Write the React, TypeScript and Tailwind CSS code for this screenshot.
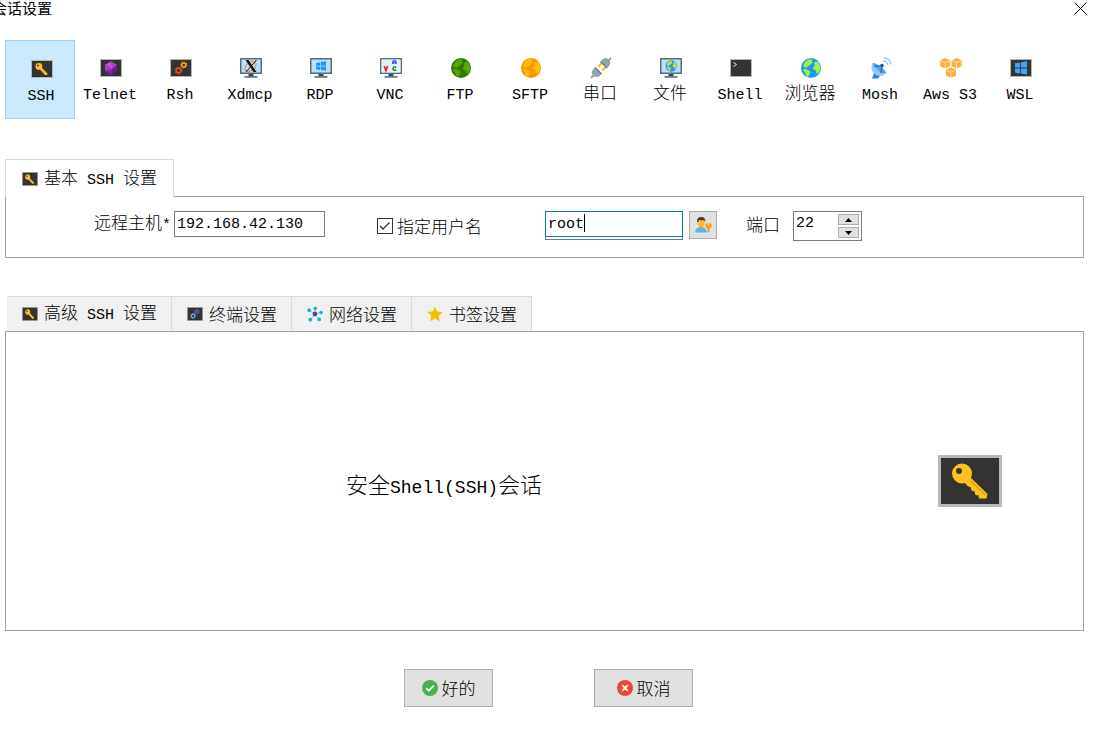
import { useState } from "react";
import type { ReactNode } from "react";

/* Renders mixed text: monospaced Latin runs beside full-width Chinese runs. */
function Mixed({ text, large = false }: { text: string; large?: boolean }) {
  const runs = text.match(/[\x00-\x7f]+|[^\x00-\x7f]+/g) ?? [];
  return (
    <span
      className={
        large
          ? "whitespace-pre font-['Noto_Sans_CJK_SC',sans-serif] text-[22px] leading-7 font-light"
          : "whitespace-pre font-['Noto_Sans_CJK_SC',sans-serif] text-[17px] leading-5 font-light"
      }
    >
      {runs.map((run, i) =>
        run.charCodeAt(0) < 128 ? (
          <span
            key={i}
            className={
              large
                ? "font-['Liberation_Mono',monospace] text-[18px] font-normal"
                : "font-['Liberation_Mono',monospace] text-[15px] font-normal"
            }
          >
            {run}
          </span>
        ) : (
          run
        ),
      )}
    </span>
  );
}

/* ---------- icons ---------- */

function KeyShape() {
  return (
    <>
      <path
        d="M32 22 L49.5 39 L48.5 43.5 H41 L40.5 40.5 L37.5 40 L36.5 36.5 L33.5 35.5 L32.5 32 L30 31.5 L26 27 Z"
        fill="#ffc21c"
      />
      <path d="M33 26 L47.5 40" stroke="#e39a12" strokeWidth="1.3" />
      <path
        fillRule="evenodd"
        d="M24 8.5a10 10 0 1 0 0 20a10 10 0 1 0 0-20zM21 13a3 3 0 1 1 0 6a3 3 0 1 1 0-6z"
        fill="#ffc21c"
      />
    </>
  );
}

function KeyLarge() {
  return (
    <svg width="64" height="52" viewBox="0 0 64 52" aria-hidden="true">
      <rect width="64" height="52" fill="#b8b8b8" />
      <rect x="3" y="3" width="58" height="46" fill="#333" />
      <KeyShape />
    </svg>
  );
}

function Term({ small = false, children }: { small?: boolean; children?: ReactNode }) {
  return (
    <svg
      width={small ? 16 : 22}
      height={small ? 14 : 18}
      viewBox="0 0 22 18"
      preserveAspectRatio="none"
      aria-hidden="true"
    >
      <rect width="22" height="18" fill="#b5b5b5" />
      <rect x="1" y="1" width="20" height="16" fill="#333" />
      {children}
    </svg>
  );
}

function KeyTerm({ small = false }: { small?: boolean }) {
  return (
    <Term small={small}>
      <g transform="translate(-.3 0) scale(.34 .345)">
        <KeyShape />
      </g>
    </Term>
  );
}

function Gears({ small = false, a, b }: { small?: boolean; a: string; b: string }) {
  return (
    <Term small={small}>
      <circle cx="8.5" cy="11.5" r="2.3" fill="none" stroke={a} strokeWidth="1.5" />
      <circle cx="8.5" cy="11.5" r="3.3" fill="none" stroke={a} strokeWidth="1.2" strokeDasharray="1.3 1.3" />
      <circle cx="13.7" cy="6" r="2" fill="none" stroke={b} strokeWidth="1.5" />
      <circle cx="13.7" cy="6" r="3" fill="none" stroke={b} strokeWidth="1.1" strokeDasharray="1.2 1.15" />
    </Term>
  );
}

function Monitor({ children }: { children?: ReactNode }) {
  return (
    <svg width="22" height="20" viewBox="0 0 22 20" aria-hidden="true">
      <rect width="22" height="16" rx=".5" fill="#546e7a" />
      <rect x="1.5" y="1.5" width="19" height="13" fill="#bbdefb" />
      <path d="M8.5 16h5v2h-5z" fill="#37474f" />
      <path d="M4.5 18h13v1.8h-13z" fill="#607d8b" />
      {children}
    </svg>
  );
}

function GlobeShape({ sea, land }: { sea: string; land: string }) {
  return (
    <>
      <circle cx="10" cy="10" r="10" fill={sea} />
      <path d="M3.5 5 L6 2.300 L9.500 1 L11.500 1.500 L10.500 3 L12 4.500 L9.500 6.500 L8 8 L6.500 8.500 L5.500 10 L3 9 L2.200 7z" fill={land} />
      <path d="M2.500 10.500 L6 11.500 L9.500 13.500 L9 16 L7.500 17.500 L7 19 L5 17.800 L4.500 15 L2.500 13z" fill={land} />
      <path d="M14.500 3.500 L17 4 L19 7.500 L19.500 10.500 L18.300 14 L16.500 16 L15.300 14.500 L15 12.500 L12.500 11.500 L12 9.500 L13.800 7.500 L13 5.500z" fill={land} />
    </>
  );
}

function Globe({ sea, land }: { sea: string; land: string }) {
  return (
    <svg width="20" height="20" viewBox="0 0 20 20" aria-hidden="true">
      <GlobeShape sea={sea} land={land} />
    </svg>
  );
}

const gem = (
  <Term>
    <path d="M11 2.5l6 3.5v5.5L11 15.8 5 11.5V6z" fill="#8e24aa" />
    <path d="M11 2.5L17 6l-4.500 4L11 2.500z" fill="#ab47bc" />
    <path d="M11 2.500L5 6l7.500 4z" fill="#ba55d3" />
    <path d="M17 6v5.5L11 15.8l1.5-6z" fill="#6a1b9a" />
    <path d="M5 6l7.5 4L5 11.5z" fill="#a63cc3" />
  </Term>
);

const xdmcp = (
  <Monitor>
    <ellipse cx="10.5" cy="8.5" rx="6" ry="4" transform="rotate(-35 10.5 8.5)" fill="none" stroke="#f08a5c" strokeWidth="1.3" />
    <path d="M5.5 2h3l8 12h-3z" fill="#111" />
    <path d="M16.5 2L6 14" stroke="#111" strokeWidth="1" />
  </Monitor>
);

const rdp = (
  <Monitor>
    <path d="M6 5l4.2-.8v3.5H6zM10.9 4.1l5.1-.9v4.5h-5.1zM6 8.4h4.2v3.5L6 11.2zM10.9 8.4H16v4.4l-5.1-.8z" fill="#2196f3" />
  </Monitor>
);

const vnc = (
  <Monitor>
    <rect x="1.5" y="1.5" width="19" height="13" fill="#e3f2fd" />
    <path d="M4.2 8l1.7 4.7L7.7 8" stroke="#f01818" strokeWidth="1.6" fill="none" />
    <path d="M12.7 6V4.2q0-1.6 1.7-1.6t1.7 1.6V6M12.7 4.9h3.4" stroke="#3030e0" strokeWidth="1.1" fill="none" />
    <path d="M16.3 9.4q-3-1.2-3.2 1.2q.2 2.5 3.2 1.3" stroke="#109820" strokeWidth="1.6" fill="none" />
  </Monitor>
);

const plug = (
  <svg width="22" height="22" viewBox="0 0 22 22" aria-hidden="true">
    <path d="M8.5 9.5L12 6M12 13.5l4-4" stroke="#ffb300" strokeWidth="2" />
    <path d="M21 1L17.500 4.500M1 21L4.500 17.500" stroke="#90a4ae" strokeWidth="1.8" />
    <path d="M10.5 4.5L13 2q2.5-2 5.5.5 3 3 .8 6L17 11z" fill="#90a4ae" />
    <path d="M5 10.500L11.500 17 9 19.500q-3 1.500-5.700-.8-2.500-2.700-.8-5.700z" fill="#90a4ae" />
    <path d="M10.500 4.500L17 11M5 10.500L11.500 17" stroke="#607d8b" strokeWidth="1.3" />
  </svg>
);

const files = (
  <Monitor>
    <g transform="translate(5.5 2.200) scale(.58)">
      <GlobeShape sea="#2196f3" land="#cddc39" />
    </g>
  </Monitor>
);

const shell = (
  <Term>
    <path d="M3.500 3.500L6.500 5.500L3.500 7.500" stroke="#eee" strokeWidth="1" fill="none" />
  </Term>
);

const dish = (
  <svg width="22" height="22" viewBox="0 0 22 22" aria-hidden="true">
    <path d="M2 21.500L4.500 15l5.500 4-2 2.500z" fill="#1e88e5" />
    <path d="M2.500 6C-.5 11 3 19.500 11 19q3.500-.3 5-3z" fill="#90caf9" />
    <path d="M2.500 6C6 5.500 15 11.500 16 16q-3 1.500-7-2T2.500 6z" fill="#42a5f5" />
    <path d="M4 9.500L12 8.500M11 16l1-7.500" stroke="#37608f" strokeWidth="1.200" />
    <circle cx="12" cy="8.500" r="1.700" fill="#0d47a1" />
    <path d="M13 3.800q4-.3 4.700 4.200M13.500.8q7 .2 7.500 7" stroke="#90caf9" strokeWidth="1.200" fill="none" />
  </svg>
);

function Cube({ x, y }: { x: number; y: number }) {
  return (
    <g transform={`translate(${x} ${y})`}>
      <path d="M5 0l5 2.300v6L5 10.500 0 8.300v-6z" fill="#fbb03b" />
      <path d="M.5 2.700L5 4.700l4.500-2M5 4.700v5.500" stroke="#fff3dc" strokeWidth=".7" fill="none" />
    </g>
  );
}

const aws = (
  <svg width="22" height="20" viewBox="0 0 22 20" aria-hidden="true">
    <Cube x={0.2} y={0} />
    <Cube x={11.6} y={0} />
    <Cube x={6} y={9.3} />
  </svg>
);

const wsl = (
  <Term>
    <path d="M5 4.300l5-.9v5.100H5zM10.900 3.300l6.100-1v6.200h-6.100zM5 9.400h5v5.100l-5-.9zM10.900 9.400H17v6.200l-6.100-1z" fill="#42a5f5" />
  </Term>
);

const network = (
  <svg width="16" height="16" viewBox="0 0 17 16" aria-hidden="true">
    <path d="M8.500 8L2 4M8.500 8V2M8.500 8L15 6.500M8.500 8l4.500 6M8.500 8l-5 6" stroke="#b0bec5" strokeWidth="1" />
    <g fill="#00bcd4">
      <circle cx="2.300" cy="4" r="2" />
      <circle cx="8.700" cy="2" r="1.900" />
      <circle cx="15" cy="6.500" r="1.900" />
      <circle cx="13" cy="13.800" r="2" />
      <circle cx="3.500" cy="14" r="2" />
    </g>
    <circle cx="8.500" cy="8" r="2.600" fill="#3f51b5" />
  </svg>
);

const star = (
  <svg width="16" height="16" viewBox="0 0 16 16" aria-hidden="true">
    <path d="M8 .5l2.300 5 5.500.6-4.100 3.700 1.200 5.500L8 12.500l-4.900 2.800 1.200-5.500L.2 6.100l5.500-.6z" fill="#f4c100" />
  </svg>
);

const userKey = (
  <svg width="17" height="16" viewBox="0 0 17 16" aria-hidden="true">
    <path d="M0 15.500q.2-4 4-5.200h4q3.800 1.200 4 5.200z" fill="#4fb8f5" />
    <path d="M4.300 8.500h3.600v2.200q-1.800 2-3.600 0z" fill="#ff9800" />
    <ellipse cx="6.200" cy="5.500" rx="3.600" ry="4.300" fill="#ffb74d" />
    <path d="M2 5Q1.800.2 6.200.1T10.400 5L9.300 3.200q-3 .4-5-.3L2.800 5z" fill="#4a3b34" />
    <path d="M10.500 6.500h6v3.500l-1.800 1.200v1.300h-.8v.9h.8v1.100l-1 1-1.200-1v-3.300l-2-1.200z" fill="#f59b15" />
    <circle cx="13.500" cy="8" r=".8" fill="#fff" />
  </svg>
);

const okIcon = (
  <svg width="16" height="16" viewBox="0 0 16 16" aria-hidden="true">
    <circle cx="8" cy="8" r="8" fill="#4caf50" />
    <path d="M4.200 8.200l2.600 2.500 5-5" stroke="#fff" strokeWidth="1.800" fill="none" />
  </svg>
);

const cancelIcon = (
  <svg width="16" height="16" viewBox="0 0 16 16" aria-hidden="true">
    <circle cx="8" cy="8" r="8" fill="#f44336" />
    <path d="M5.200 5.200l5.600 5.600M10.800 5.200l-5.600 5.600" stroke="#fff" strokeWidth="1.800" />
  </svg>
);

/* ---------- data ---------- */

const sessions: { name: string; icon: ReactNode }[] = [
  { name: "SSH", icon: <KeyTerm /> },
  { name: "Telnet", icon: gem },
  { name: "Rsh", icon: <Gears a="#e65100" b="#f9a01b" /> },
  { name: "Xdmcp", icon: xdmcp },
  { name: "RDP", icon: rdp },
  { name: "VNC", icon: vnc },
  { name: "FTP", icon: <Globe sea="#2e7d00" land="#55a800" /> },
  { name: "SFTP", icon: <Globe sea="#ff9100" land="#ffc107" /> },
  { name: "串口", icon: plug },
  { name: "文件", icon: files },
  { name: "Shell", icon: shell },
  { name: "浏览器", icon: <Globe sea="#2196f3" land="#9cf24a" /> },
  { name: "Mosh", icon: dish },
  { name: "Aws S3", icon: aws },
  { name: "WSL", icon: wsl },
];

const tabs: { name: string; icon: ReactNode }[] = [
  { name: "高级 SSH 设置", icon: <KeyTerm small /> },
  { name: "终端设置", icon: <Gears small a="#64b5f6" b="#5c6bc0" /> },
  { name: "网络设置", icon: network },
  { name: "书签设置", icon: star },
];

const fieldFont = "font-['Liberation_Mono','Noto_Sans_CJK_SC',monospace] text-[15px]";

/* ---------- page ---------- */

export default function App() {
  const [session, setSession] = useState("SSH");
  const [host, setHost] = useState("192.168.42.130");
  const [named, setNamed] = useState(true);
  const [user, setUser] = useState("root");
  const [port, setPort] = useState(22);

  return (
    <div className="overflow-hidden bg-white pr-[11px] pl-[5px] text-black">
      <header className="flex h-10 items-start justify-between">
        <h1 className="-ml-[13px] font-['Noto_Sans_CJK_SC',sans-serif] text-[15px] leading-4">会话设置</h1>
        <button type="button" aria-label="关闭" className="-mr-1 flex size-4 items-center justify-center">
          <svg width="13" height="13" viewBox="0 0 13 13" aria-hidden="true">
            <path d="M.5 .5l12 12M12.500 .5l-12 12" stroke="#000" strokeWidth="1" />
          </svg>
        </button>
      </header>

      <nav className="flex">
        {sessions.map(({ name, icon }) => (
          <button
            key={name}
            type="button"
            aria-pressed={name === session}
            onClick={() => setSession(name)}
            className={
              name === session
                ? "flex h-[79px] w-[70px] shrink-0 flex-col items-center border border-[#99d1ff] bg-[#cce8ff] pt-4 pl-0.5"
                : "flex h-[79px] w-[70px] shrink-0 flex-col items-center border border-transparent pt-[15px]"
            }
          >
            <span className="flex h-6 items-center pl-0.5">{icon}</span>
            <span className="mt-0.5 flex">
              <Mixed text={name} />
            </span>
          </button>
        ))}
      </nav>

      <section className="mt-10">
        <div className="flex" role="tablist">
          <button
            type="button"
            role="tab"
            aria-selected="true"
            className="relative -mb-px flex h-[38px] items-center gap-1.5 border border-b-0 border-[#d9d9d9] bg-white px-4"
          >
            <KeyTerm small />
            <Mixed text="基本 SSH 设置" />
          </button>
        </div>
        <div className="flex h-[62px] items-start border border-[#a0a0a0] pt-3.5 pl-[88px]">
          <label htmlFor="host" className="mt-px flex">
            <Mixed text="远程主机*" />
          </label>
          <input
            id="host"
            value={host}
            onChange={(e) => setHost(e.target.value)}
            className={`ml-[3px] h-[26px] w-[151px] border border-[#7a7a7a] bg-white px-0.5 outline-none ${fieldFont}`}
          />
          <label className="mt-[5px] ml-[52px] flex items-center gap-1">
            <span className="grid size-4 place-items-center">
              <input
                type="checkbox"
                checked={named}
                onChange={(e) => setNamed(e.target.checked)}
                className="col-start-1 row-start-1 size-4 appearance-none border border-[#333] bg-white"
              />
              {named && (
                <svg width="12" height="12" viewBox="0 0 12 12" className="pointer-events-none col-start-1 row-start-1" aria-hidden="true">
                  <path d="M1 6l3 3 6.500-6.500" stroke="#333" strokeWidth="1.300" fill="none" />
                </svg>
              )}
            </span>
            <Mixed text="指定用户名" />
          </label>
          <div className="relative ml-[63px] h-[29px] w-[138px] border border-[#7a7a7a]">
            <input
              aria-label="用户名"
              value={user}
              onChange={(e) => setUser(e.target.value)}
              className={`absolute -top-px -left-px h-[26px] w-[138px] border border-[#0078d7] bg-white px-0.5 outline-none ${fieldFont}`}
            />
            <span className="absolute top-0.5 left-[38px] h-[18px] w-px bg-black" />
          </div>
          <button
            type="button"
            aria-label="选择用户"
            className="ml-1.5 flex size-7 items-center justify-center border border-[#adadad] bg-[#e1e1e1]"
          >
            {userKey}
          </button>
          <label htmlFor="port" className="mt-[3px] ml-[29px] flex">
            <Mixed text="端口" />
          </label>
          <div className="ml-[13px] flex h-[30px] w-[69px] border border-[#7a7a7a] bg-white p-0.5">
            <input
              id="port"
              inputMode="numeric"
              value={port}
              onChange={(e) => setPort(Number(e.target.value) || 0)}
              className={`h-5 w-0 grow outline-none ${fieldFont}`}
            />
            <div className="flex w-[21px] flex-col gap-0.5">
              <button
                type="button"
                aria-label="增加"
                onClick={() => setPort(port + 1)}
                className="flex h-[11px] items-center justify-center border border-[#adadad] bg-[#e1e1e1]"
              >
                <svg width="7" height="4" viewBox="0 0 7 4" aria-hidden="true">
                  <path d="M3.500 0L7 4H0z" />
                </svg>
              </button>
              <button
                type="button"
                aria-label="减少"
                onClick={() => setPort(Math.max(0, port - 1))}
                className="flex h-[11px] items-center justify-center border border-[#adadad] bg-[#e1e1e1]"
              >
                <svg width="7" height="4" viewBox="0 0 7 4" aria-hidden="true">
                  <path d="M3.500 4L7 0H0z" />
                </svg>
              </button>
            </div>
          </div>
        </div>
      </section>

      <section className="mt-[38px]">
        <div className="ml-0.5 flex" role="tablist">
          {tabs.map(({ name, icon }) => (
            <button
              key={name}
              type="button"
              role="tab"
              aria-selected="false"
              className="flex h-[35px] items-center gap-1.5 border-t border-r border-[#d9d9d9] bg-[#f0f0f0] pr-3.5 pl-[15px]"
            >
              {icon}
              <Mixed text={name} />
            </button>
          ))}
        </div>
        <div className="flex h-[300px] items-center justify-between border border-[#a0a0a0] pr-[81px] pl-[340px]">
          <p className="mt-2">
            <Mixed text="安全Shell(SSH)会话" large />
          </p>
          <KeyLarge />
        </div>
      </section>

      <footer className="mt-[38px] flex justify-center gap-[101px] pb-7 pl-2">
        <button type="button" className="flex h-[38px] w-[89px] items-center justify-center gap-1 border border-[#adadad] bg-[#e1e1e1]">
          {okIcon}
          <Mixed text="好的" />
        </button>
        <button type="button" className="flex h-[38px] w-[99px] items-center justify-center gap-1 border border-[#adadad] bg-[#e1e1e1]">
          {cancelIcon}
          <Mixed text="取消" />
        </button>
      </footer>
    </div>
  );
}
